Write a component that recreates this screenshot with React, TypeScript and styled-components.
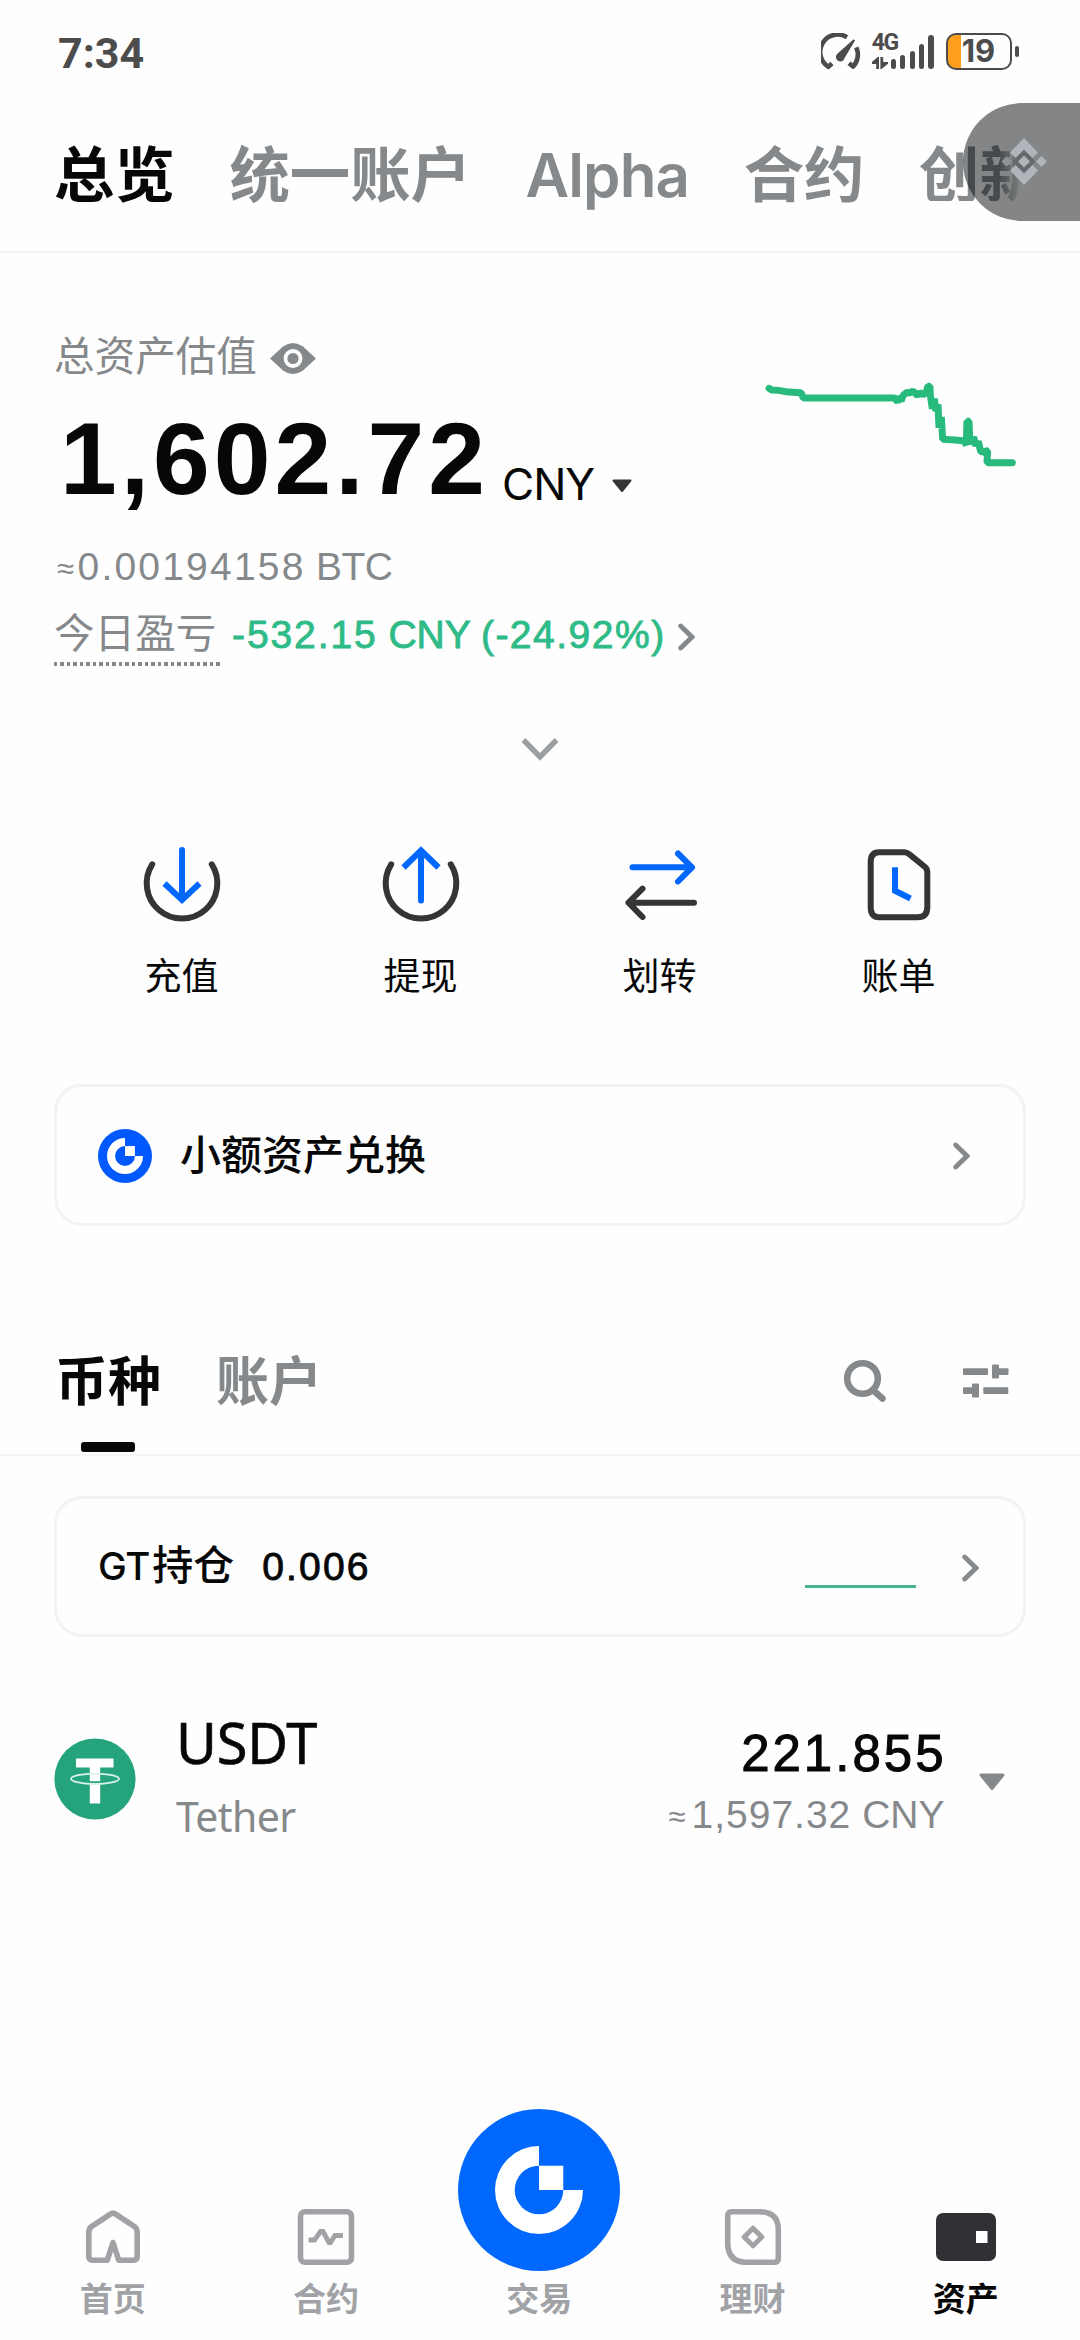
import React from "react";
import styled, { createGlobalStyle } from "styled-components";

const CJK = '"Noto Sans CJK SC", sans-serif';
const NUM = '"Liberation Sans", "Noto Sans CJK SC", sans-serif';
const UI = 'Inter, "Noto Sans CJK SC", sans-serif';

const color = {
  ink: "#060808",
  muted: "#86898b",
  faint: "#a0a2a5",
  line: "#f4f4f5",
  blue: "#0068ff",
  green: "#2fbb88",
  dark: "#333536",
  status: "#4c4c4c",
};

const Global = createGlobalStyle`
  * { box-sizing: border-box; }
  body { margin: 0; background: #fefefe; color: ${color.ink}; }
  svg { display: block; flex: none; }
`;

const Page = styled.div`
  position: relative;
  display: flex;
  flex-direction: column;
  width: 1080px;
  height: 2340px;
  overflow: hidden;
  background: #fefefe;
  font-family: ${CJK};
`;

/* ---------- status bar ---------- */

const StatusBar = styled.header`
  display: flex;
  justify-content: space-between;
  align-items: center;
  height: 107px;
  padding: 0 61px 0 58px;
`;

const Clock = styled.span`
  margin-bottom: 2px;
  font: 700 43px/50px Roboto, sans-serif;
  color: ${color.status};
`;

const StatusIcons = styled.div`
  display: flex;
  align-items: center;
  height: 37px;
  margin-bottom: 5px;
`;

const Signal = styled.div`
  display: flex;
  align-items: flex-end;
  height: 35px;
  margin-left: 11px;
`;

const Network = styled.div`
  display: flex;
  flex-direction: column;
  justify-content: space-between;
  width: 26px;
  height: 35px;
  margin-right: -7px;
`;

const NetworkName = styled.span`
  font: 700 23px/18px Roboto, sans-serif;
  letter-spacing: -1.5px;
  color: ${color.status};
`;

const Bars = styled.div`
  display: flex;
  align-items: flex-end;
  gap: 4.2px;
`;

const Bar = styled.i<{ $h: number }>`
  width: 5.2px;
  height: ${(p) => p.$h}px;
  border-radius: 3px;
  background: ${color.status};
`;

const Battery = styled.div`
  display: flex;
  align-items: center;
  justify-content: center;
  width: 66px;
  height: 37px;
  margin-left: 12px;
  border: 2.5px solid ${color.status};
  border-radius: 10px;
  background: linear-gradient(90deg, #ff9d1c 12.5px, transparent 12.5px);
  font: 700 31px/32px Inter, sans-serif;
  color: ${color.status};
`;

const BatteryTip = styled.i`
  width: 4.5px;
  height: 11px;
  margin-left: 3px;
  border-radius: 2px;
  background: ${color.status};
`;

/* ---------- top tabs ---------- */

const TopTabs = styled.nav`
  display: flex;
  align-items: baseline;
  gap: 54.6px;
  height: 146px;
  padding: 34px 0 0 54px;
  border-bottom: 2px solid ${color.line};
  overflow: hidden;
`;

const TopTab = styled.span<{ $active?: boolean; $latin?: boolean; $cut?: boolean }>`
  flex: none;
  font-family: ${(p) => (p.$latin ? UI : CJK)};
  font-size: ${(p) => (p.$latin ? 60 : 60.4)}px;
  line-height: 60px;
  font-weight: ${(p) => (p.$latin ? 600 : 700)};
  letter-spacing: ${(p) => (p.$latin ? "-0.9px" : 0)};
  color: ${(p) => (p.$active ? color.ink : color.muted)};
  ${(p) => p.$cut && "-webkit-mask-image: linear-gradient(90deg, #000 80px, transparent 104px); mask-image: linear-gradient(90deg, #000 80px, transparent 104px);"}
`;

const FloatingBubble = styled.div`
  position: absolute;
  top: 103px;
  right: 0;
  display: flex;
  align-items: center;
  width: 117.5px;
  height: 118px;
  padding-left: 37px;
  border-radius: 59px 0 0 59px;
  background: rgba(10, 14, 16, 0.505);
`;

/* ---------- summary ---------- */

const Summary = styled.section`
  display: flex;
  justify-content: space-between;
  height: 415px;
  padding: 78px 60px 0 54px;
`;

const SummaryText = styled.div`
  display: flex;
  flex-direction: column;
`;

const LabelRow = styled.div`
  display: flex;
  align-items: center;
  gap: 13px;
  height: 46px;
`;

const Label = styled.span`
  font-size: 40.6px;
  line-height: 46px;
  color: ${color.muted};
`;

const EyeIcon = styled.svg`
  margin-top: 8px;
`;

const AmountRow = styled.div`
  display: flex;
  align-items: flex-end;
  height: 102px;
  margin: 31px 0 34px 6px;
`;

const Amount = styled.span`
  font: 700 102px/102px ${NUM};
  letter-spacing: 4px;
`;

const Currency = styled.span`
  margin: 0 0 4px 13px;
  font: 400 44px/44px ${UI};
  letter-spacing: -1px;
`;

const CurrencyCaret = styled.svg`
  margin: 0 0 17px 18px;
`;

/* Digits are tracked wide while the currency code keeps its natural width. */
const Figures = styled.span<{ $track: number }>`
  letter-spacing: ${(p) => p.$track}px;
`;

const Approx = styled.span<{ $gap: number }>`
  margin-right: ${(p) => p.$gap}px;
  font-size: 31px;
  line-height: 30px;
  vertical-align: 1px;
`;

const Btc = styled.span`
  height: 46px;
  margin-left: 3px;
  font: 400 39px/46px ${NUM};
  color: ${color.muted};
`;

const PnlRow = styled.div`
  display: flex;
  align-items: baseline;
  margin-top: 18px;
`;

const PnlLabel = styled(Label)`
  width: 166px;
  padding-bottom: 12px;
  background: repeating-linear-gradient(90deg, ${color.muted} 0 3.4px, transparent 3.4px 6.5px) left bottom / 100% 4px no-repeat;
`;

const PnlValue = styled.span`
  margin-left: 12px;
  font: 400 39px/46px ${NUM};
  -webkit-text-stroke: 0.9px ${color.green};
  color: ${color.green};
`;

const PnlChevron = styled.div`
  align-self: flex-start;
  margin: 15px 0 0 12px;
`;

const TrendChart = styled.svg`
  margin-top: 46px;
`;

/* ---------- quick actions ---------- */

const Expander = styled.div`
  display: flex;
  justify-content: center;
  height: 177px;
  padding-top: 69px;
`;

const Actions = styled.section`
  display: grid;
  grid-template-columns: repeat(4, 239px);
  justify-content: center;
  height: 239px;
`;

const Action = styled.div`
  display: flex;
  flex-direction: column;
  align-items: center;
  gap: 27px;
  font-size: 37px;
  line-height: 44px;
  color: ${color.ink};
`;

/* ---------- cards ---------- */

const Card = styled.section<{ $h: number; $right: number }>`
  display: flex;
  align-items: center;
  flex: none;
  height: ${(p) => p.$h}px;
  margin: 0 54px;
  padding: 2px ${(p) => p.$right - 3}px 0 41px;
  border: 3px solid #f3f3f4;
  border-radius: 28px;
`;

const CardTitle = styled.span`
  flex: 1;
  margin-left: 28px;
  padding-bottom: 9px;
  font-size: 41px;
  line-height: 46px;
  font-weight: 500;
`;

const Holding = styled.div`
  display: flex;
  flex: 1;
  align-items: baseline;
  padding-bottom: 7px;
`;

const HoldingName = styled.span`
  font: 500 38.5px/46px ${UI};
  letter-spacing: -0.3px;
`;

const HoldingNameCjk = styled.span`
  margin-left: 2px;
  font: 500 41px/46px ${CJK};
`;

const HoldingValue = styled.span`
  margin-left: 28px;
  font: 400 39px/46px ${NUM};
  letter-spacing: 2.2px;
  -webkit-text-stroke: 0.9px ${color.ink};
`;

const FlatTrend = styled.i`
  width: 111px;
  height: 3px;
  margin: 38px 46px 0 0;
  background: #46b58b;
`;

/* ---------- asset list ---------- */

const ListHeader = styled.div`
  display: flex;
  align-items: flex-start;
  height: 230px;
  margin-bottom: 40px;
  padding: 122px 71px 0 55px;
  border-bottom: 2px solid #f5f5f5;
`;

const ListTab = styled.div<{ $active?: boolean }>`
  display: flex;
  flex-direction: column;
  align-items: center;
  margin-right: 55px;
  font-size: 53px;
  line-height: 60px;
  font-weight: 700;
  color: ${(p) => (p.$active ? color.ink : color.muted)};
  &::after {
    content: "";
    width: 54px;
    height: 10px;
    margin-top: 34px;
    border-radius: 3px;
    background: ${(p) => (p.$active ? color.ink : "transparent")};
  }
`;

const ListTools = styled.div`
  display: flex;
  align-items: center;
  gap: 76px;
  height: 66px;
  margin-left: auto;
`;

const AssetRow = styled.div`
  display: flex;
  align-items: center;
  height: 140px;
  margin-top: 72px;
  padding: 0 75px 0 54px;
`;

const AssetName = styled.div`
  display: flex;
  flex: 1;
  flex-direction: column;
  gap: 21px;
  height: 140px;
  margin-left: 40px;
`;

const Symbol = styled.span`
  font: 400 56px/66px "Noto Sans", sans-serif;
  letter-spacing: -0.2px;
  -webkit-text-stroke: 0.6px ${color.ink};
`;

const FullName = styled.span`
  font: 400 41px/40px "Noto Sans", sans-serif;
  letter-spacing: -0.6px;
  color: ${color.muted};
`;

const AssetValue = styled.div`
  display: flex;
  flex-direction: column;
  align-items: flex-end;
  gap: 15px;
  height: 140px;
  padding-top: 22px;
`;

const Quantity = styled.span`
  font: 400 51px/46px ${NUM};
  letter-spacing: 3px;
  margin-right: -3.5px;
  -webkit-text-stroke: 1px ${color.ink};
`;

const Fiat = styled.span`
  margin-right: -1.5px;
  font: 400 39px/46px ${NUM};
  color: ${color.muted};
`;

const RowCaret = styled.svg`
  margin: 5px 0 0 36px;
`;

/* ---------- bottom navigation ---------- */

const BottomNav = styled.nav`
  display: grid;
  grid-template-columns: repeat(5, 213.3px);
  height: 231px;
  margin-top: auto;
  padding-left: 6px;
`;

const NavItem = styled.div<{ $active?: boolean; $main?: boolean }>`
  display: flex;
  flex-direction: column;
  align-items: center;
  justify-content: flex-end;
  gap: ${(p) => (p.$main ? 6 : 10)}px;
  padding-bottom: 23px;
  font-size: 33px;
  line-height: 40px;
  font-weight: 700;
  color: ${(p) => (p.$active ? color.ink : color.faint)};
`;

/* ---------- drawings ---------- */

const GateLogo = ({ size, mark, fill }: { size: number; mark: number; fill: string }) => {
  const inner = mark * 0.552;
  return (
    <svg width={size} height={size} viewBox={`${-size / 2} ${-size / 2} ${size} ${size}`}>
      <circle r={size / 2} fill={fill} />
      <path
        fill="#fff"
        d={`M0 ${-mark}A${mark} ${mark} 0 1 0 ${mark} 0H${inner}A${inner} ${inner} 0 1 1 0 ${-inner}Z`}
      />
      <rect x="0" y={-inner} width={inner} height={inner} fill="#fff" />
    </svg>
  );
};

const ChevronRight = ({ w = 17, h = 28 }: { w?: number; h?: number }) => (
  <svg width={w} height={h} viewBox="0 0 17 28" fill="none" stroke={color.muted} strokeWidth="4.8" strokeLinecap="round">
    <path d="M2.7 3L14 14L2.7 25" />
  </svg>
);

const Gauge = () => (
  <svg width="40" height="37" viewBox="0 0 40 37" fill="none" stroke={color.status} strokeWidth="4.6">
    <path d="M11 30.5L7.3 33.8A17.3 17.3 0 0 1 26 4.2" strokeLinejoin="round" />
    <path d="M28 30.2L32 33.6A17.3 17.3 0 0 0 35.3 14.4" strokeLinejoin="round" />
    <path d="M32.6 6.2L34 7.6L23.6 25A4.4 4.4 0 1 1 16.6 20.6Z" fill={color.status} stroke="none" />
  </svg>
);

const DataArrows = () => (
  <svg width="16" height="12" viewBox="0 0 16 12" fill="none" stroke={color.status} strokeWidth="2.8">
    <path d="M5.6 12V2L1.2 5.6H5" />
    <path d="M9.8 0V10L14.2 6.4H10.4" />
  </svg>
);

const BubbleMark = () => (
  <svg width="48" height="48" viewBox="0 0 48 48" fill="#b1b4bb">
    <path d="M24 0L38 14.5L32.5 20L24 11.5L15.5 20L10 14.5Z" />
    <path d="M24 47L10 32.5L15.5 27L24 35.5L32.5 27L38 32.5Z" />
    <path d="M24 12L35.5 23.5L24 35L12.5 23.5Z" fill="#66696c" />
    <path d="M24 17.5L30 23.5L24 29.5L18 23.5Z" />
    <path d="M41.5 18L47 23.5L41.5 29L36 23.5Z" />
    <path d="M6.5 18.5L11.5 23.5L6.5 28.5L1.5 23.5Z" fill="#909397" />
  </svg>
);

const TetherLogo = () => (
  <svg width="82" height="82" viewBox="0 0 82 82">
    <circle cx="41" cy="41" r="40.6" fill="#25a37c" />
    <path d="M22 20.5H59.5V29.5H46.2V65.5H35.8V29.5H22Z" fill="#fff" />
    <path d="M35 44.2Q41 45 47 44.2" stroke="#25a37c" strokeWidth="2.6" fill="none" />
    <ellipse cx="41" cy="40.8" rx="24" ry="5.2" fill="none" stroke="#d9f3ea" strokeWidth="1.8" />
  </svg>
);

const ActionIcon = ({ kind }: { kind: string }) => (
  <svg width="80" height="80" viewBox="0 0 80 80" fill="none" strokeWidth="6" strokeLinecap="round" stroke={color.dark}>
    {(kind === "in" || kind === "out") && <path d="M10.2 19.4A35.3 35.3 0 1 0 69.8 19.4" />}
    {kind === "in" && (
      <g stroke={color.blue}>
        <path d="M40 5V54" />
        <path d="M22.5 38.5L40 55L57.5 38.5" strokeLinecap="butt" />
      </g>
    )}
    {kind === "out" && (
      <g stroke={color.blue}>
        <path d="M40 55.5V8" />
        <path d="M22.5 22.5L40 5.5L57.5 22.5" strokeLinecap="butt" />
      </g>
    )}
    {kind === "transfer" && (
      <>
        <path d="M12.5 22.3H71M58 8.5L72 22.3L58 36.5" stroke={color.blue} strokeLinejoin="round" />
        <path d="M74 57.7H10M22.5 43.7L8.5 57.7L22.5 72" strokeLinejoin="round" />
      </>
    )}
    {kind === "bill" && (
      <>
        <path d="M20 7.3H45Q48 7.3 50.5 9.3L66 22Q68.3 24 68.3 27V62.5Q68.3 72.3 58.5 72.3H20Q11.7 72.3 11.7 62.5V17Q11.7 7.3 20 7.3Z" />
        <path d="M36 22.3V45.8L51.5 53.5" stroke={color.blue} strokeLinecap="butt" />
      </>
    )}
  </svg>
);

const NavIcon = ({ kind }: { kind: string }) => (
  <svg width="60" height="60" viewBox="0 0 60 60" fill="none" stroke={color.faint} strokeWidth="5.6">
    {kind === "home" && (
      <path d="M24.3 53.2H9.5Q5.8 53.2 5.8 49.5V25Q5.8 21.8 8.4 19.6L27 7.4Q30 5 33 7.4L51.6 19.6Q54.2 21.8 54.2 25V49.5Q54.2 53.2 50.5 53.2H35.7L30 35.5Z" strokeLinejoin="round" />
    )}
    {kind === "futures" && (
      <>
        <rect x="4.5" y="4.7" width="51" height="50.6" rx="4.5" />
        <path d="M12.5 33H18.5L24.5 24.5H27L33 35.5H34.5L39 28.5H47" strokeWidth="4.8" />
      </>
    )}
    {kind === "earn" && (
      <>
        <path d="M8.7 4.7H37.5Q55.3 5.5 55.3 22.5V51.3Q55.3 55.3 51.3 55.3H22.5Q5.5 54.5 4.7 37.5V8.7Q4.7 4.7 8.7 4.7Z" />
        <path d="M30 21.2L38.8 30L30 38.8L21.2 30Z" strokeWidth="5" strokeLinejoin="round" />
      </>
    )}
    {kind === "assets" && (
      <g stroke="none">
        <rect y="6" width="60" height="48" rx="7" fill="#2f3134" />
        <rect x="40" y="24" width="11.5" height="12" fill="#fff" />
      </g>
    )}
  </svg>
);

const actions = [
  { kind: "in", label: "充值" },
  { kind: "out", label: "提现" },
  { kind: "transfer", label: "划转" },
  { kind: "bill", label: "账单" },
];

const signalBars = [9.5, 14, 18, 25, 33.5];

export default function App() {
  return (
    <Page>
      <Global />
      <StatusBar>
        <Clock>7:34</Clock>
        <StatusIcons>
          <Gauge />
          <Signal>
            <Network>
              <NetworkName>4G</NetworkName>
              <DataArrows />
            </Network>
            <Bars>
              {signalBars.map((h) => (
                <Bar key={h} $h={h} />
              ))}
            </Bars>
          </Signal>
          <Battery>19</Battery>
          <BatteryTip />
        </StatusIcons>
      </StatusBar>

      <TopTabs>
        <TopTab $active>总览</TopTab>
        <TopTab>统一账户</TopTab>
        <TopTab $latin>Alpha</TopTab>
        <TopTab>合约</TopTab>
        <TopTab $cut>创新</TopTab>
      </TopTabs>
      <FloatingBubble>
        <BubbleMark />
      </FloatingBubble>

      <Summary>
        <SummaryText>
          <LabelRow>
            <Label>总资产估值</Label>
            <EyeIcon width="46" height="31" viewBox="0 0 46 31">
              <path d="M0 15.5L13 3.6Q23 -3.6 33 3.6L46 15.5L33 27.4Q23 34.6 13 27.4Z" fill={color.muted} />
              <circle cx="23" cy="15.5" r="7.5" fill={color.muted} stroke="#fefefe" strokeWidth="3.8" />
            </EyeIcon>
          </LabelRow>
          <AmountRow>
            <Amount>1,602.72</Amount>
            <Currency>CNY</Currency>
            <CurrencyCaret width="20" height="14" viewBox="0 0 20 14">
              <path d="M1.5 1.5H18.5L10 12Z" fill={color.dark} stroke={color.dark} strokeWidth="2" strokeLinejoin="round" />
            </CurrencyCaret>
          </AmountRow>
          <Btc>
            <Approx $gap={3.5}>≈</Approx>
            <Figures $track={2.2}>0.00194158</Figures>
            <Figures $track={-0.5}> BTC</Figures>
          </Btc>
          <PnlRow>
            <PnlLabel>今日盈亏</PnlLabel>
            <PnlValue>
              <Figures $track={1.9}>-532.15</Figures>
              <Figures $track={0}> CNY </Figures>
              <Figures $track={1.5}>(-24.92%)</Figures>
            </PnlValue>
            <PnlChevron>
              <ChevronRight />
            </PnlChevron>
          </PnlRow>
        </SummaryText>
        <TrendChart width="256.7" height="93.3" viewBox="190 110 770 280" fill="none" stroke="#28b97c">
          <path
            strokeWidth="21"
            strokeLinecap="round"
            strokeLinejoin="bevel"
            d="M208 144L216 149L236 150L258 154L304 157L311 173H585L594 185L600 168L604 182L611 164L622 156L630 158L640 152L654 166L660 156L670 163L679 158L685 137L691 138L692 165L698 205L704 175L709 212L715 192L718 262L725 230L729 297L764 299L793 301L800 314L802 242L808 243L810 290L800 270L812 310L822 290L828 316L836 304L843 333L854 336L859 331L864 332L862 367H938"
          />
        </TrendChart>
      </Summary>

      <Expander>
        <svg width="38" height="25" viewBox="0 0 38 25" fill="none" stroke="#9c9fa1" strokeWidth="5.4">
          <path d="M2.5 3L19 19.8L35.5 3" />
        </svg>
      </Expander>

      <Actions>
        {actions.map((a) => (
          <Action key={a.kind}>
            <ActionIcon kind={a.kind} />
            {a.label}
          </Action>
        ))}
      </Actions>

      <Card $h={142} $right={56}>
        <GateLogo size={54} mark={18} fill="#0059ff" />
        <CardTitle>小额资产兑换</CardTitle>
        <ChevronRight />
      </Card>

      <ListHeader>
        <ListTab $active>币种</ListTab>
        <ListTab>账户</ListTab>
        <ListTools>
          <svg width="44" height="44" viewBox="0 0 44 44" fill="none" stroke={color.muted} strokeWidth="6.6">
            <circle cx="19.5" cy="19.5" r="15.3" />
            <path d="M31 32L39.5 39.5" strokeLinecap="round" />
          </svg>
          <svg width="46" height="34" viewBox="0 0 46 34" fill={color.muted}>
            <rect x="0" y="4.2" width="25" height="6.8" rx="1" />
            <rect x="29" y="0.4" width="7" height="14.2" rx="1" />
            <rect x="33" y="4.2" width="12.5" height="6.8" rx="1" />
            <rect x="0" y="23.2" width="12" height="6.8" rx="1" />
            <rect x="9" y="19.4" width="7" height="14.2" rx="1" />
            <rect x="20.3" y="23.2" width="25" height="6.8" rx="1" />
          </svg>
        </ListTools>
      </ListHeader>

      <Card $h={141} $right={47.5}>
        <Holding>
          <HoldingName>GT</HoldingName>
          <HoldingNameCjk>持仓</HoldingNameCjk>
          <HoldingValue>0.006</HoldingValue>
        </Holding>
        <FlatTrend />
        <ChevronRight />
      </Card>

      <AssetRow>
        <TetherLogo />
        <AssetName>
          <Symbol>USDT</Symbol>
          <FullName>Tether</FullName>
        </AssetName>
        <AssetValue>
          <Quantity>221.855</Quantity>
          <Fiat>
            <Approx $gap={6}>≈</Approx>
            <Figures $track={1}>1,597.32</Figures>
            <Figures $track={0}> CNY</Figures>
          </Fiat>
        </AssetValue>
        <RowCaret width="26" height="18" viewBox="0 0 26 18">
          <path d="M2 2H24L13 15.5Z" fill={color.muted} stroke={color.muted} strokeWidth="3" strokeLinejoin="round" />
        </RowCaret>
      </AssetRow>

      <BottomNav>
        <NavItem>
          <NavIcon kind="home" />
          首页
        </NavItem>
        <NavItem>
          <NavIcon kind="futures" />
          合约
        </NavItem>
        <NavItem $main>
          <GateLogo size={162} mark={44} fill={color.blue} />
          交易
        </NavItem>
        <NavItem>
          <NavIcon kind="earn" />
          理财
        </NavItem>
        <NavItem $active>
          <NavIcon kind="assets" />
          资产
        </NavItem>
      </BottomNav>
    </Page>
  );
}
